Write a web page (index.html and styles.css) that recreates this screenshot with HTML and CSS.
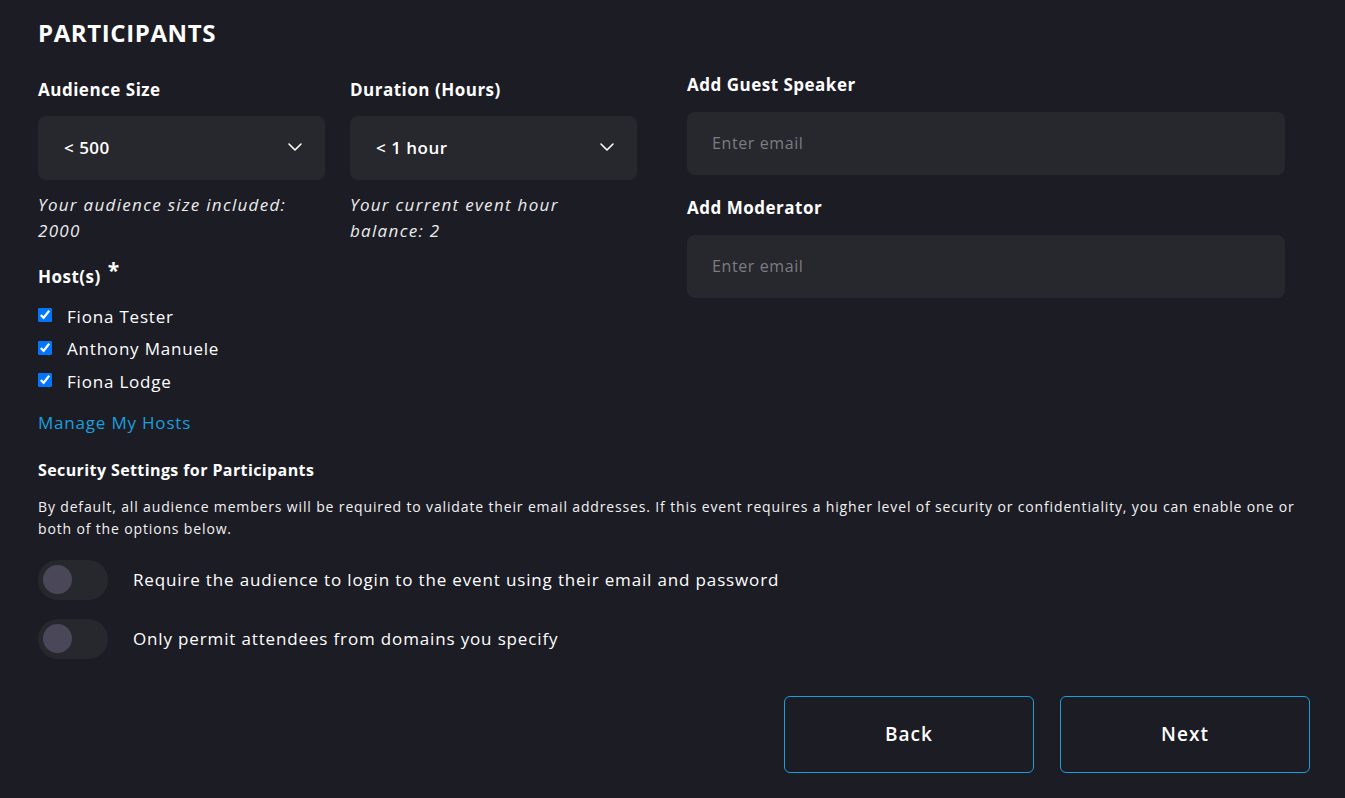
FILE: index.html
```html
<!doctype html>
<html lang="en">
<head>
  <meta charset="utf-8" />
  <meta name="viewport" content="width=device-width,initial-scale=1" />
  <title>Participants</title>
  <link rel="stylesheet" href="styles.css">
</head>
<body>

  <div class="page">
    <h1>PARTICIPANTS</h1>

    <div class="top">
      <div class="left">
        <div class="grid">
          <div>
            <label>Audience Size</label>
            <div class="select">
              <span>&lt; 500</span>
              <svg class="chev" width="14" height="8" viewBox="0 0 14 8"><path d="M1 1l6 6 6-6" fill="none" stroke="#fff" stroke-width="1.6" stroke-linecap="round" stroke-linejoin="round"/></svg>
            </div>
            <p class="hint">Your audience size included: 2000</p>
          </div>
          <div>
            <label>Duration (Hours)</label>
            <div class="select">
              <span>&lt; 1 hour</span>
              <svg class="chev" width="14" height="8" viewBox="0 0 14 8"><path d="M1 1l6 6 6-6" fill="none" stroke="#fff" stroke-width="1.6" stroke-linecap="round" stroke-linejoin="round"/></svg>
            </div>
            <p class="hint">Your current event hour balance: 2</p>
          </div>
        </div>

        <label class="hosts-label">Host(s) <span class="req">*</span></label>
        <div class="hosts">
          <div class="host"><input type="checkbox" checked> <span>Fiona Tester</span></div>
          <div class="host"><input type="checkbox" checked> <span>Anthony Manuele</span></div>
          <div class="host"><input type="checkbox" checked> <span>Fiona Lodge</span></div>
        </div>
        <a class="manage" href="#">Manage My Hosts</a>
      </div>

      <div class="right">
        <label>Add Guest Speaker</label>
        <input class="email" type="text" placeholder="Enter email">
        <label class="mod">Add Moderator</label>
        <input class="email" type="text" placeholder="Enter email">
      </div>
    </div>

    <!-- security -->
    <h2>Security Settings for Participants</h2>
    <p class="desc">By default, all audience members will be required to validate their email addresses. If this event requires a higher level of security or confidentiality, you can enable one or both of the options below.</p>

    <div class="toggles">
      <div class="toggle-row">
        <div class="toggle"><div class="knob"></div></div>
        <span>Require the audience to login to the event using their email and password</span>
      </div>
      <div class="toggle-row">
        <div class="toggle"><div class="knob"></div></div>
        <span>Only permit attendees from domains you specify</span>
      </div>
    </div>

    <div class="actions">
      <button class="btn">Back</button>
      <button class="btn">Next</button>
    </div>
  </div>

</body>
</html>
```

FILE: styles.css
```css
:root{
  --bg:#1c1c24;
  --field:#27272e;
  --accent:#1b9fdc;
  --text:#ffffff;
  font-family: "Open Sans", "Noto Sans", Arial, sans-serif;
}
body{
  margin:0;
  background:var(--bg);
  color:var(--text);
}

.page{
  width:1272px;
  padding:18px 0 0 38px;
}

h1{
  margin:0 0 25px 0;
  font-size:24px;
  line-height:30px;
  font-weight:700;
  letter-spacing:0.6px;
}

.top{
  display:flex;
  gap:50px;
  width:1247px;
}
.left{ width:599px; padding-top:5px; }
.right{ width:598px; }

.grid{
  display:grid;
  grid-template-columns: 287px 287px;
  gap:25px;
}

label{
  display:block;
  font-size:17px;
  line-height:24px;
  font-weight:700;
  letter-spacing:0.5px;
}

.select{
  margin-top:14px;
  height:64px;
  background:var(--field);
  border-radius:8px;
  display:flex;
  align-items:center;
  justify-content:space-between;
  padding:0 23px 0 26px;
  font-size:17px;
  font-weight:600;
  letter-spacing:0.5px;
}
.select span{ margin-top:-2px; }
.chev{ margin-top:-2px; }

.hint{
  margin:12px 0 0 0;
  font-size:17px;
  line-height:26px;
  font-style:italic;
  color:#ececec;
  letter-spacing:1.3px;
}

.hosts-label{ margin-top:21px; }
.req{ font-size:21px; line-height:0; position:relative; top:-5px; margin-left:2px; }

.hosts{ margin-top:11px; }
.host{
  display:flex;
  align-items:center;
  height:32.5px;
  font-size:17px;
  letter-spacing:0.8px;
}
.host input{
  margin:0 15px 0 0;
  width:14px;
  height:14px;
  accent-color:#0075ff;
  position:relative;
  top:-1px;
}

.manage{
  display:inline-block;
  margin-top:13px;
  font-size:17px;
  line-height:24px;
  color:var(--accent);
  text-decoration:none;
  letter-spacing:0.8px;
}

.right label{ margin-bottom:15px; }
.right .mod{ margin-top:21px; }

.email{
  display:block;
  width:100%;
  height:63px;
  box-sizing:border-box;
  border:0;
  border-radius:8px;
  background:var(--field);
  padding:0 25px 2px;
  font-family:inherit;
  font-size:16px;
  letter-spacing:0.6px;
  color:#fff;
}
.email::placeholder{ color:#7c7c82; }

h2{
  margin:23px 0 0 0;
  font-size:16px;
  line-height:24px;
  font-weight:700;
  letter-spacing:0.4px;
}

.desc{
  margin:14px 0 0 0;
  font-size:14px;
  line-height:22px;
  color:#f2f2f2;
  letter-spacing:0.85px;
}

.toggles{
  display:flex;
  flex-direction:column;
  gap:19px;
  margin-top:20px;
}
.toggle-row{
  display:flex;
  align-items:center;
  gap:25px;
  font-size:17px;
  letter-spacing:0.85px;
}

.toggle{
  width:70px;
  height:40px;
  border-radius:20px;
  background:var(--field);
  display:flex;
  align-items:center;
  padding-left:5px;
  box-sizing:border-box;
}
.knob{
  width:29px;
  height:29px;
  border-radius:50%;
  background:#4a4858;
}

.actions{
  display:flex;
  justify-content:flex-end;
  gap:26px;
  margin-top:37px;
}

.btn{
  width:250px;
  height:77px;
  background:transparent;
  border:1px solid var(--accent);
  border-radius:6px;
  color:#fff;
  font-family:inherit;
  font-size:19px;
  font-weight:600;
  letter-spacing:1px;
  cursor:pointer;
}
```
